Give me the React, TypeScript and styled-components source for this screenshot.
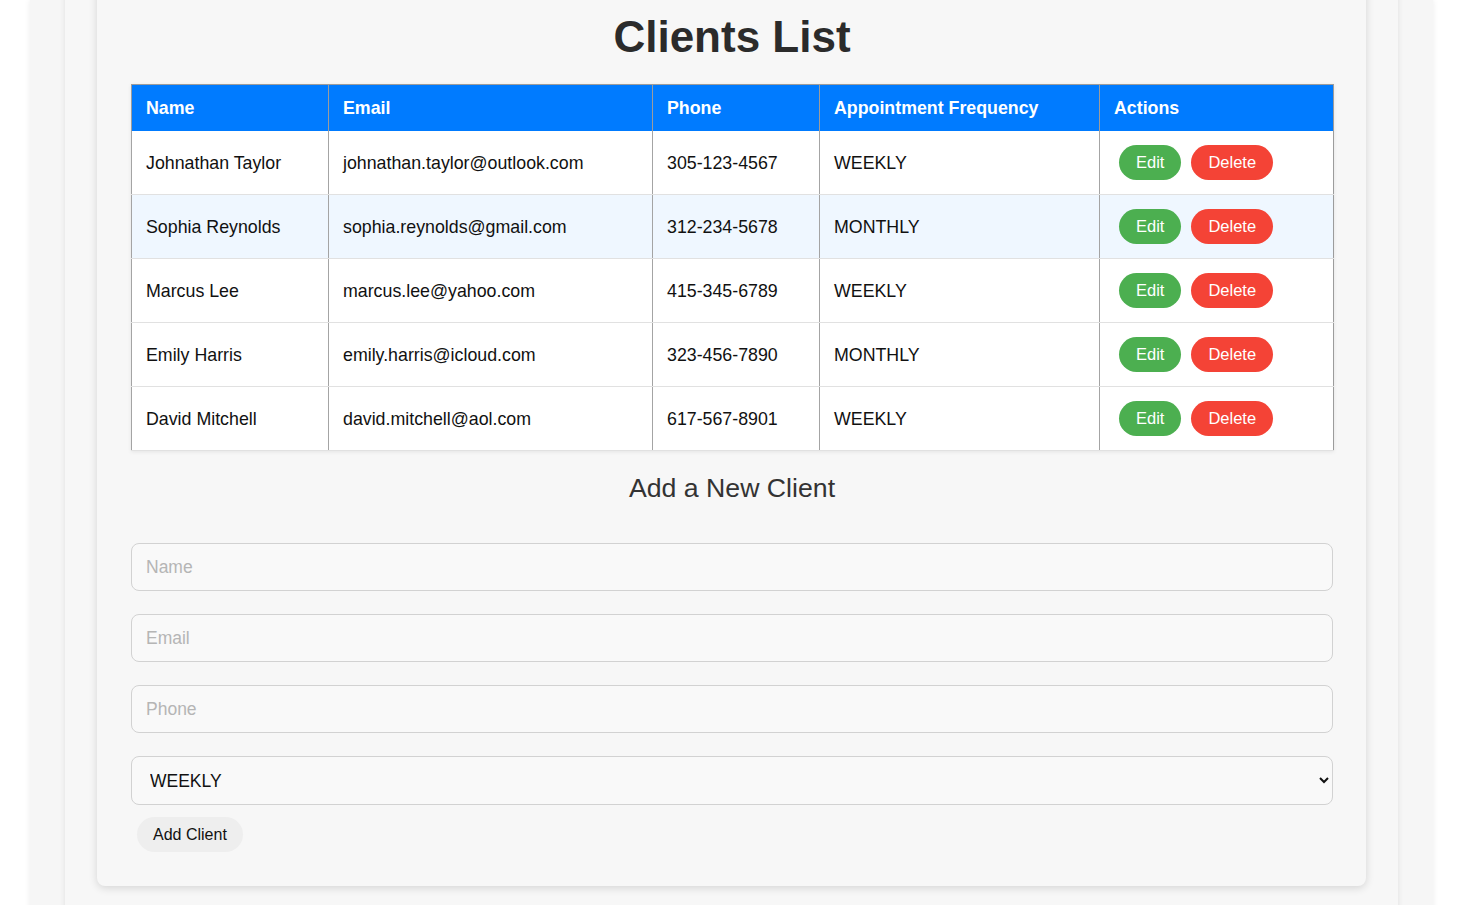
import React from 'react'
import styled, { createGlobalStyle } from 'styled-components'

const GlobalStyle = createGlobalStyle`
  html, body {
    margin: 0;
    padding: 0;
    background: #ffffff;
    font-family: "Liberation Sans", Arial, sans-serif;
  }
  #root {
    min-height: 905px;
  }
`

const Page = styled.div`
  margin: 0 27px 0 30px;
  padding: 0 35px;
  min-height: 905px;
  background: #f6f6f6;
  box-shadow: 0 0 6px rgba(0, 0, 0, 0.08);
  overflow: hidden;
`

const Frame = styled.div`
  padding: 0 32px 60px;
  min-height: 905px;
  background: #f7f7f7;
  box-shadow: 0 0 6px rgba(0, 0, 0, 0.09);
`

const Card = styled.div`
  margin-top: -26px;
  padding: 34px 33px 34px 34px;
  background: #f7f7f7;
  border-radius: 8px;
  box-shadow: 0 2px 8px rgba(0, 0, 0, 0.14);
`

const Title = styled.h1`
  margin: 4px 0 22px;
  text-align: center;
  font-size: 44px;
  line-height: 50px;
  font-weight: 700;
  color: #2b2b2b;
`

const Table = styled.table`
  width: 100%;
  table-layout: fixed;
  border-collapse: collapse;
  border: 1px solid #9c9c9c;
  background: #ffffff;
  box-shadow: 0 1px 4px rgba(0, 0, 0, 0.08);
`

const HeadCell = styled.th<{ $w: number }>`
  box-sizing: border-box;
  width: ${p => p.$w}px;
  padding: 13px 14px;
  background: #007bff;
  color: #ffffff;
  text-align: left;
  font-size: 17.8px;
  font-weight: 700;
  line-height: 20px;
  border-left: 1px solid #9c9c9c;
`

const Row = styled.tr<{ $alt?: boolean }>`
  background: ${p => (p.$alt ? '#eff7ff' : '#ffffff')};
`

const Cell = styled.td`
  padding: 14px 14px;
  font-size: 17.8px;
  line-height: 20px;
  color: #111;
  white-space: nowrap;
  border-left: 1px solid #a4a4a4;
  border-bottom: 1px solid #e1e1e1;
`

const Pill = styled.button<{ $kind: 'edit' | 'delete' }>`
  margin: 0 5px;
  padding: 8px 17px;
  border: none;
  border-radius: 18px;
  background: ${p => (p.$kind === 'edit' ? '#4caf50' : '#f44336')};
  color: #ffffff;
  font-family: "Liberation Sans", Arial, sans-serif;
  font-size: 16.5px;
  line-height: 19px;
  cursor: pointer;
`

const SubTitle = styled.h2`
  margin: 20px 0 38px;
  text-align: center;
  font-size: 26.7px;
  line-height: 34px;
  font-weight: 400;
  color: #333;
`

const Form = styled.form`
  display: flex;
  flex-direction: column;
`

const Field = styled.input`
  box-sizing: border-box;
  height: 48px;
  margin-bottom: 23px;
  padding: 0 14px;
  border: 1px solid #d2d2d2;
  border-radius: 8px;
  background: #f9f9f9;
  font-family: "Liberation Sans", Arial, sans-serif;
  font-size: 17.5px;
  color: #222;
  &::placeholder {
    color: #b5b5b5;
  }
`

const Picker = styled.select`
  box-sizing: border-box;
  height: 49px;
  padding: 0 10px 0 14px;
  border: 1px solid #d2d2d2;
  border-radius: 8px;
  background: #f9f9f9;
  font-family: "Liberation Sans", Arial, sans-serif;
  font-size: 17.5px;
  color: #111;
`

const Submit = styled.button`
  align-self: flex-start;
  margin: 12px 0 0 6px;
  padding: 8px 16px;
  border: none;
  border-radius: 18px;
  background: #eeeeee;
  color: #111;
  font-family: "Liberation Sans", Arial, sans-serif;
  font-size: 16px;
  line-height: 19px;
  cursor: pointer;
`

const clients = [
  { name: 'Johnathan Taylor', email: 'johnathan.taylor@outlook.com', phone: '305-123-4567', freq: 'WEEKLY' },
  { name: 'Sophia Reynolds', email: 'sophia.reynolds@gmail.com', phone: '312-234-5678', freq: 'MONTHLY' },
  { name: 'Marcus Lee', email: 'marcus.lee@yahoo.com', phone: '415-345-6789', freq: 'WEEKLY' },
  { name: 'Emily Harris', email: 'emily.harris@icloud.com', phone: '323-456-7890', freq: 'MONTHLY' },
  { name: 'David Mitchell', email: 'david.mitchell@aol.com', phone: '617-567-8901', freq: 'WEEKLY' },
]

const columns = [
  { label: 'Name', w: 197 },
  { label: 'Email', w: 324 },
  { label: 'Phone', w: 167 },
  { label: 'Appointment Frequency', w: 280 },
  { label: 'Actions', w: 234 },
]

export default function App() {
  return (
    <>
      <GlobalStyle />
      <Page>
        <Frame>
          <Card>
            <Title>Clients List</Title>
            <Table>
              <thead>
                <tr>
                  {columns.map(c => (
                    <HeadCell key={c.label} $w={c.w}>{c.label}</HeadCell>
                  ))}
                </tr>
              </thead>
              <tbody>
                {clients.map((c, i) => (
                  <Row key={c.email} $alt={i === 1}>
                    <Cell>{c.name}</Cell>
                    <Cell>{c.email}</Cell>
                    <Cell>{c.phone}</Cell>
                    <Cell>{c.freq}</Cell>
                    <Cell>
                      <Pill $kind="edit">Edit</Pill>
                      <Pill $kind="delete">Delete</Pill>
                    </Cell>
                  </Row>
                ))}
              </tbody>
            </Table>
            <SubTitle>Add a New Client</SubTitle>
            <Form onSubmit={e => e.preventDefault()}>
              <Field placeholder="Name" />
              <Field placeholder="Email" />
              <Field placeholder="Phone" />
              <Picker defaultValue="WEEKLY">
                <option value="WEEKLY">WEEKLY</option>
                <option value="MONTHLY">MONTHLY</option>
              </Picker>
              <Submit type="submit">Add Client</Submit>
            </Form>
          </Card>
        </Frame>
      </Page>
    </>
  )
}
